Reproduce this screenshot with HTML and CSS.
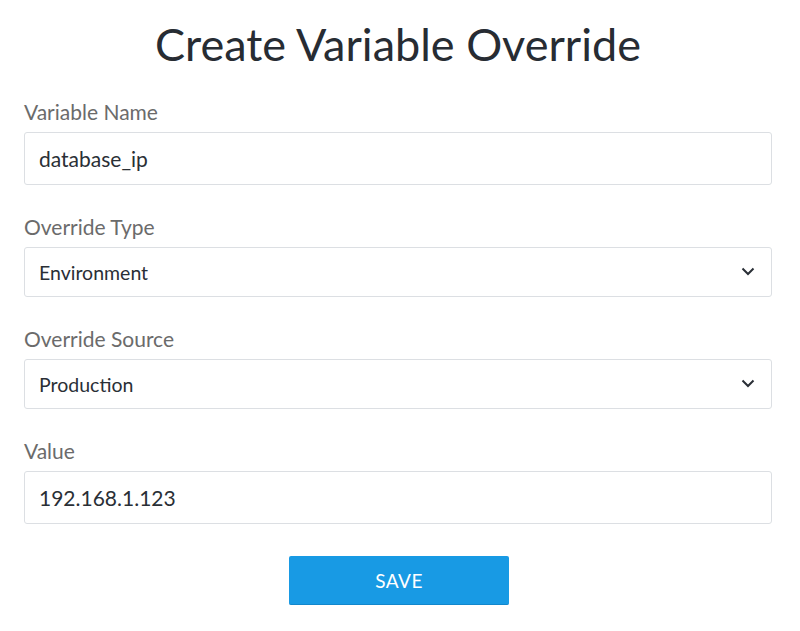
FILE: index.html
```html
<!DOCTYPE html>
<html lang="en">
<head>
    <meta charset="UTF-8">
    <meta name="viewport" content="width=device-width, initial-scale=1.0">
    <title>Create Variable Override</title>
    <link rel="stylesheet" href="styles.css">
</head>
<body>

    <div class="override-form">
        <h1>Create Variable Override</h1>
        <form id="overrideForm">
            <div class="field">
                <label for="var_name">Variable Name</label>
                <input type="text" id="var_name" name="var_name" value="database_ip">
            </div>

            <div class="field">
                <label for="override_type">Override Type</label>
                <div class="select-wrap">
                    <select id="override_type" name="override_type">
                        <option value="environment">Environment</option>
                        <option value="host">Host</option>
                    </select>
                    <svg class="chevron" width="14" height="9" viewBox="0 0 14 9">
                        <path d="M1.5 1.5 L7 7 L12.5 1.5" fill="none" stroke="#2a2f36" stroke-width="2"/>
                    </svg>
                </div>
            </div>

            <div class="field">
                <label for="override_source">Override Source</label>
                <div class="select-wrap">
                    <select id="override_source" name="override_source">
                        <option value="production">Production</option>
                        <option value="staging">Staging</option>
                    </select>
                    <svg class="chevron" width="14" height="9" viewBox="0 0 14 9">
                        <path d="M1.5 1.5 L7 7 L12.5 1.5" fill="none" stroke="#2a2f36" stroke-width="2"/>
                    </svg>
                </div>
            </div>

            <div class="field">
                <label for="value">Value</label>
                <input type="text" id="value" name="value" value="192.168.1.123">
            </div>

            <div class="actions">
                <button type="submit">SAVE</button>
            </div>
        </form>
    </div>

</body>
</html>
```

FILE: styles.css
```css
body {
    margin: 0;
    padding: 0;
    background-color: #ffffff;
    font-family: Lato, "Open Sans", sans-serif;
}

.override-form {
    width: 748px;
    margin-left: 24px;
}

.override-form h1 {
    margin: 0;
    padding-top: 15px;
    height: 85px;
    text-align: center;
    font-size: 45px;
    font-weight: 400;
    line-height: 58px;
    color: #272c33;
}

.field {
    margin-bottom: 30px;
}

.field label {
    display: block;
    font-size: 21px;
    line-height: 24px;
    color: #6b6b6b;
    margin-bottom: 8px;
}

.field input,
.field select {
    display: block;
    box-sizing: border-box;
    width: 100%;
    height: 53px;
    padding: 0 14px;
    font-family: inherit;
    font-size: 21px;
    color: #2a2f36;
    background-color: #fff;
    border: 1px solid #dcdfe3;
    border-radius: 3px;
    outline: none;
}

.field select {
    height: 50px;
    font-size: 19.5px;
    appearance: none;
    -webkit-appearance: none;
}

.select-wrap {
    position: relative;
}

/* chevron drawn over the native select arrow */
.select-wrap .chevron {
    position: absolute;
    right: 17px;
    top: 20px;
    pointer-events: none;
}

.actions {
    display: flex;
    justify-content: center;
    padding-top: 2px;
    padding-left: 2px;
}

.actions button {
    width: 220px;
    height: 49px;
    font-family: inherit;
    font-size: 19px;
    letter-spacing: 0.5px;
    color: #fff;
    background-color: #189ae4;
    border: none;
    border-bottom: 1px solid #1287cc;
    border-radius: 2px;
    cursor: pointer;
}
```
